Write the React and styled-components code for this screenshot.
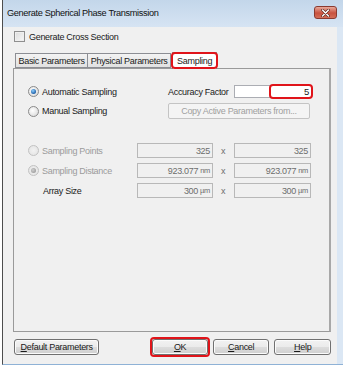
import styled, { createGlobalStyle } from "styled-components";

const GlobalStyle = createGlobalStyle`
  html, body {
    margin: 0;
    padding: 0;
    background: #ffffff;
  }
  body {
    font-family: "Liberation Sans", Arial, sans-serif;
    font-size: 9px;
    letter-spacing: -0.3px;
    white-space: nowrap;
    color: #1a1a1a;
  }
`;

const Frame = styled.div`
  margin-left: 2px;
  width: 340px;
  height: 364px;
  border-left: 1px solid #4d4d4d;
  border-bottom: 1px solid #8fb2d6;
  background: #dbe7f4;
  display: flex;
  flex-direction: column;
`;

const TitleBar = styled.div`
  height: 27px;
  display: flex;
  align-items: center;
  justify-content: space-between;
  padding: 0 6px 0 4px;
  background: linear-gradient(#c3d6ea, #d6e4f3);
  .title {
    font-size: 9.2px;
    letter-spacing: -0.35px;
    color: #111;
    margin-top: -1px;
  }
`;

const CloseButton = styled.div`
  width: 21px;
  height: 11px;
  border: 1px solid #8a3a30;
  border-radius: 3px;
  background: linear-gradient(#e9a99a, #c8523f 55%, #d46e58);
  display: flex;
  align-items: center;
  justify-content: center;
  margin-top: -2px;
`;

const Client = styled.div`
  flex: 1;
  margin-right: 6px;
  background: #f0f0f0;
  padding: 4px 6px 0 10px;
  display: flex;
  flex-direction: column;
`;

const CheckRow = styled.label`
  display: flex;
  align-items: center;
  gap: 4px;
  height: 11px;
  margin-left: 1px;
`;

const CheckBox = styled.span`
  width: 9px;
  height: 9px;
  border: 1px solid #8f8f8f;
  background: linear-gradient(135deg, #dcdcdc, #f7f7f7);
  box-shadow: inset 0 0 0 1px #efefef;
`;

const TabStrip = styled.div`
  display: flex;
  align-items: flex-end;
  margin-top: 10px;
  padding-left: 2px;
  height: 16px;
  position: relative;
  z-index: 1;
`;

const Tab = styled.div`
  height: ${(p) => (p.$active ? "16px" : "13px")};
  padding: 0 ${(p) => (p.$active ? "4px" : "2.5px")};
  display: flex;
  align-items: center;
  border: 1px solid #8c8e94;
  border-bottom: ${(p) => (p.$active ? "none" : "1px solid #8c8e94")};
  margin-left: ${(p) => (p.$active ? "1px" : "-1px")};
  margin-bottom: ${(p) => (p.$active ? "-1px" : "0")};
  background: ${(p) => (p.$active ? "#ffffff" : "linear-gradient(#f3f3f3, #e1e1e1)")};
  position: relative;
  &:first-child {
    margin-left: 0;
  }
`;

const Outline = styled.span`
  position: absolute;
  inset: ${(p) => p.$inset || "-2px"};
  border: 2px solid #e0141a;
  border-radius: 4px;
  pointer-events: none;
`;

const Panel = styled.div`
  height: 264px;
  width: 318px;
  border: 1px solid #9a9a9a;
  border-right: 2px solid #a8a8a8;
  background: #f0f0f0;
  padding: 16px 0 0 14px;
  box-sizing: border-box;
  display: flex;
  flex-direction: column;
`;

const TopGrid = styled.div`
  display: grid;
  grid-template-columns: 140px 66px 78px;
  grid-template-rows: 13px 16px;
  row-gap: 5px;
  align-items: center;
`;

const RadioRow = styled.div`
  display: flex;
  align-items: center;
  gap: 3px;
  color: ${(p) => (p.$disabled ? "#9b9b9b" : "#1a1a1a")};
`;

const RadioDot = styled.span`
  width: 9px;
  height: 9px;
  border-radius: 50%;
  border: 1px solid ${(p) => (p.$disabled ? "#c2c2c2" : "#8a8a8a")};
  background: ${(p) =>
    p.$disabled ? "radial-gradient(#f2f2f2, #e2e2e2)" : "radial-gradient(circle at 40% 40%, #ffffff, #d4d4d4)"};
  display: flex;
  align-items: center;
  justify-content: center;
  &::after {
    content: "";
    width: 5px;
    height: 5px;
    border-radius: 50%;
    display: ${(p) => (p.$checked ? "block" : "none")};
    background: ${(p) =>
      p.$disabled ? "radial-gradient(circle at 40% 40%, #cfcfcf, #8d8d8d)" : "radial-gradient(circle at 40% 35%, #8fd0ff, #1d5fa8 70%)"};
  }
`;

const FieldLabel = styled.span`
  padding-left: ${(p) => p.$indent || "0"};
`;

const InputBox = styled.div`
  height: 13px;
  box-sizing: border-box;
  border: 1px solid #abadb3;
  background: #ffffff;
  position: relative;
  display: flex;
  align-items: center;
  justify-content: flex-end;
  padding-right: 2px;
  font-size: 9.5px;
`;

const DisabledButton = styled.div`
  grid-column: 2 / span 2;
  width: 142px;
  height: 16px;
  box-sizing: border-box;
  border: 1px solid #c4c4c4;
  border-radius: 2px;
  background: #f4f4f4;
  color: #a0a0a0;
  display: flex;
  align-items: center;
  justify-content: center;
`;

const BottomGrid = styled.div`
  margin-top: 24px;
  display: grid;
  grid-template-columns: 109px 76px 21px 77px;
  grid-auto-rows: 15px;
  row-gap: 5px;
  align-items: center;
`;

const ValueBox = styled.div`
  height: 15px;
  box-sizing: border-box;
  border: 1px solid #b8b8b8;
  background: #f0f0f0;
  color: #6d6d6d;
  display: flex;
  align-items: center;
  justify-content: flex-end;
  padding-right: 2px;
  small {
    font-size: 7.5px;
    margin-left: 2px;
  }
`;

const Times = styled.span`
  color: #6d6d6d;
  padding-left: 8px;
`;

const ButtonRow = styled.div`
  display: flex;
  align-items: center;
  margin-top: 7px;
  padding-left: 1px;
`;

const Button = styled.div`
  width: ${(p) => p.$w}px;
  height: 16px;
  box-sizing: border-box;
  border: 1px solid #707070;
  border-radius: 3px;
  background: linear-gradient(#f2f2f2 0%, #ebebeb 50%, #dddddd 51%, #cfcfcf 100%);
  box-shadow: inset 0 0 0 1px #fbfbfb;
  display: flex;
  align-items: center;
  justify-content: center;
  margin-left: ${(p) => p.$ml || 0}px;
  position: relative;
  u {
    text-decoration: underline;
  }
`;

function Radio({ label, checked, disabled }) {
  return (
    <RadioRow $disabled={disabled}>
      <RadioDot $checked={checked} $disabled={disabled} />
      <span>{label}</span>
    </RadioRow>
  );
}

export default function App() {
  return (
    <>
      <GlobalStyle />
      <Frame>
        <TitleBar>
          <span className="title">Generate Spherical Phase Transmission</span>
          <CloseButton>
            <svg width="9" height="8" viewBox="0 0 9 8">
              <path d="M1.5 1 L7.5 7 M7.5 1 L1.5 7" stroke="#5a2a22" strokeWidth="2.6" strokeLinecap="round" />
              <path d="M1.5 1 L7.5 7 M7.5 1 L1.5 7" stroke="#ffffff" strokeWidth="1.4" strokeLinecap="round" />
            </svg>
          </CloseButton>
        </TitleBar>
        <Client>
          <CheckRow>
            <CheckBox />
            <span>Generate Cross Section</span>
          </CheckRow>
          <TabStrip>
            <Tab>Basic Parameters</Tab>
            <Tab>Physical Parameters</Tab>
            <Tab $active>
              Sampling
              <Outline $inset="-1px -2px 0 -2px" />
            </Tab>
          </TabStrip>
          <Panel>
            <TopGrid>
              <Radio label="Automatic Sampling" checked />
              <FieldLabel>Accuracy Factor</FieldLabel>
              <InputBox>
                5
                <Outline $inset="-2px -2px -2px 34px" />
              </InputBox>
              <Radio label="Manual Sampling" />
              <DisabledButton>Copy Active Parameters from...</DisabledButton>
            </TopGrid>
            <BottomGrid>
              <Radio label="Sampling Points" disabled />
              <ValueBox>325</ValueBox>
              <Times>x</Times>
              <ValueBox>325</ValueBox>

              <Radio label="Sampling Distance" checked disabled />
              <ValueBox>
                923.077<small>nm</small>
              </ValueBox>
              <Times>x</Times>
              <ValueBox>
                923.077<small>nm</small>
              </ValueBox>

              <FieldLabel $indent="15px">Array Size</FieldLabel>
              <ValueBox>
                300<small>µm</small>
              </ValueBox>
              <Times>x</Times>
              <ValueBox>
                300<small>µm</small>
              </ValueBox>
            </BottomGrid>
          </Panel>
          <ButtonRow>
            <Button $w={86}>
              <span>
                <u>D</u>efault Parameters
              </span>
            </Button>
            <Button $w={56} $ml={53}>
              <span>
                <u>O</u>K
              </span>
              <Outline $inset="-3px" />
            </Button>
            <Button $w={57} $ml={5}>
              <span>
                <u>C</u>ancel
              </span>
            </Button>
            <Button $w={57} $ml={5}>
              <span>
                <u>H</u>elp
              </span>
            </Button>
          </ButtonRow>
        </Client>
      </Frame>
    </>
  );
}
